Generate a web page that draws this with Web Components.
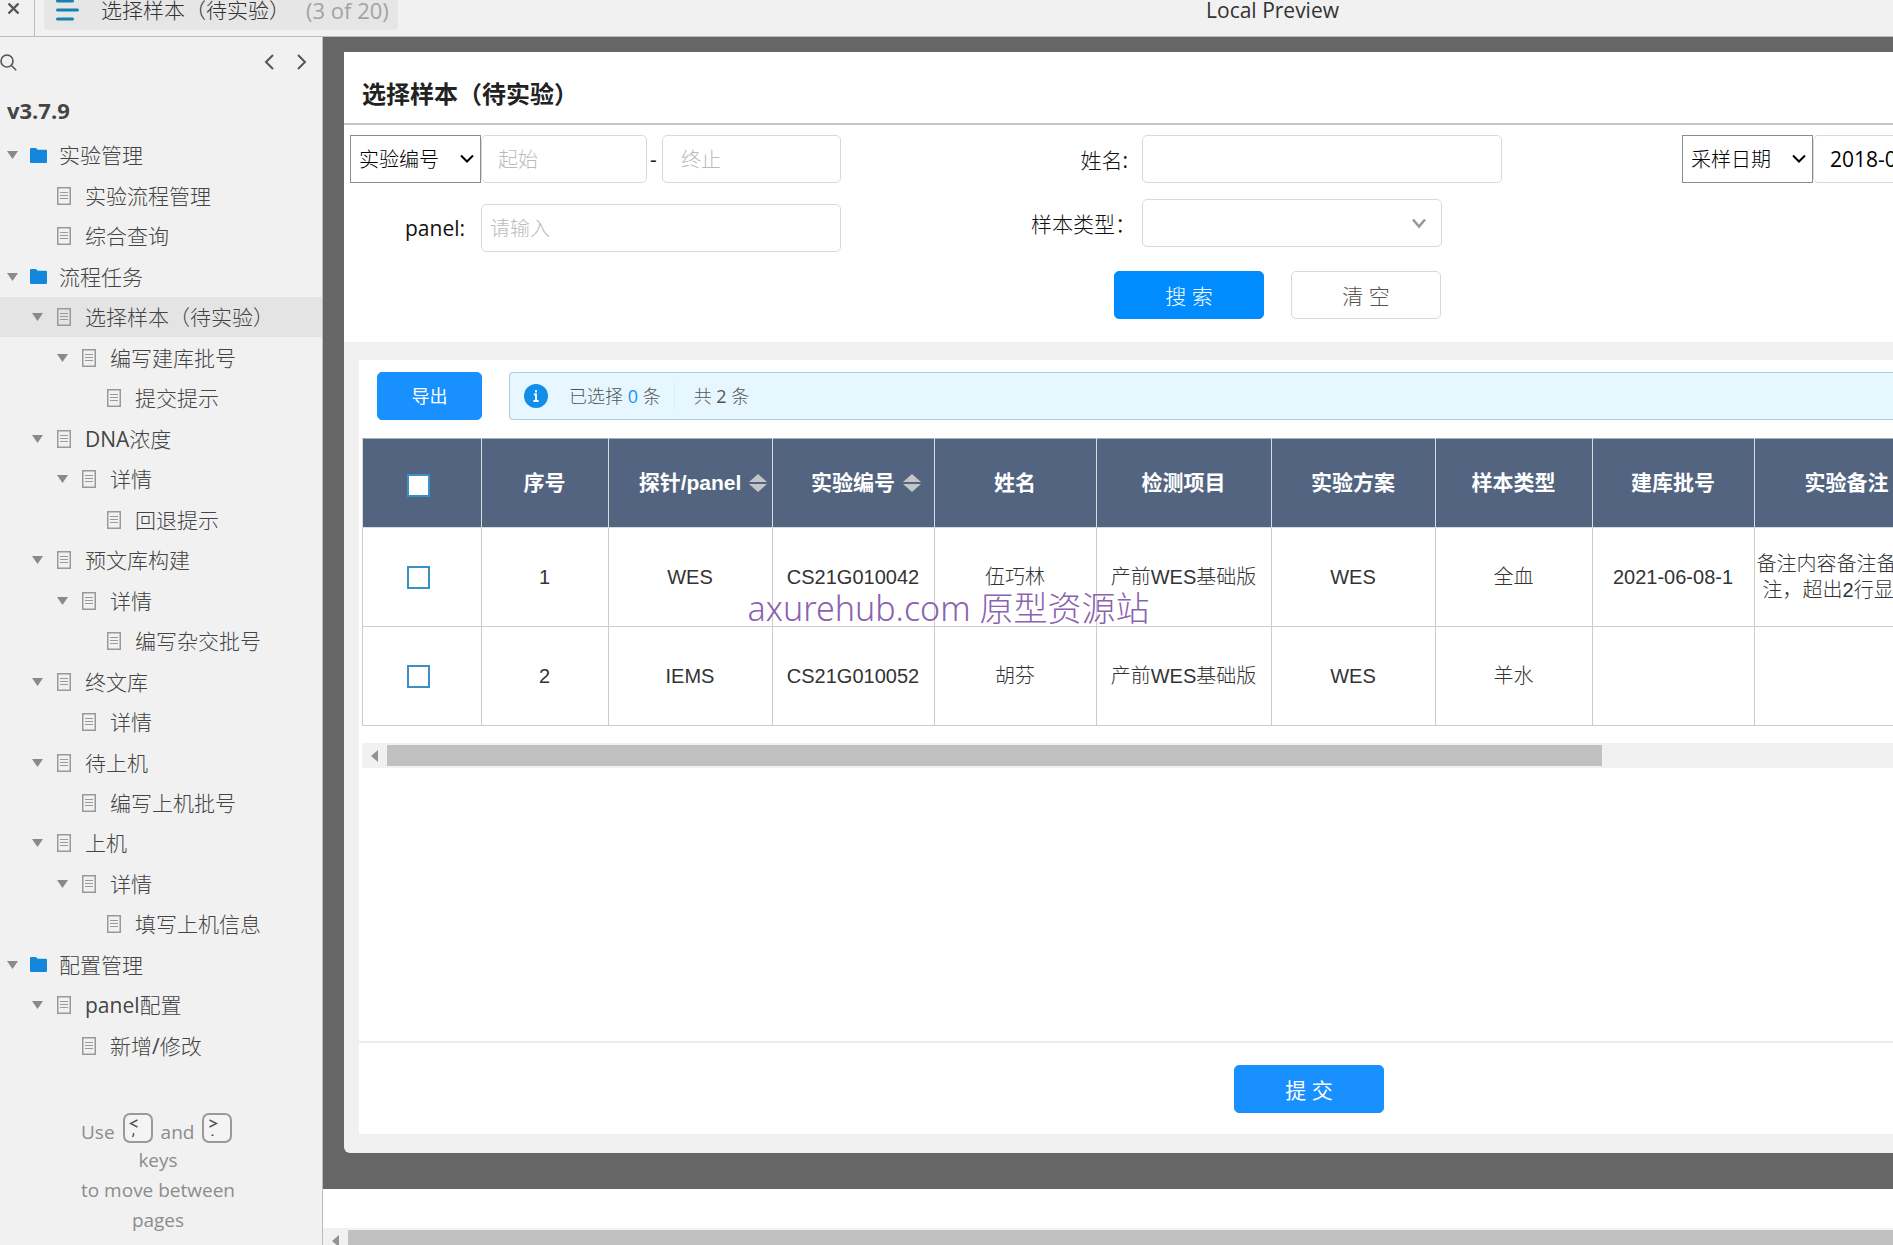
<!DOCTYPE html>
<html lang="zh-CN">
<head>
<meta charset="utf-8">
<title>选择样本（待实验）</title>
<style>
  html, body { margin: 0; height: 100%; }
  body {
    font-family: "Open Sans", "Noto Sans CJK SC", sans-serif;
    font-size: 21px;
    color: #333;
    background: #fff;
    overflow: hidden;
    --thin-cjk: "Open Sans", "Noto Sans CJK SC Light", "Noto Sans CJK SC", sans-serif;
  }
</style>
</head>
<body>
<preview-app></preview-app>

<script>
const BASE = `<style>
  *, *::before, *::after { box-sizing: border-box; }
  a { color: inherit; text-decoration: none; }
  button, input, select { font: inherit; color: inherit; margin: 0; }
  svg { display: block; flex: none; }
</style>`;

/* Registers an element whose shadow root holds the given markup. */
function define(tag, markup) {
  customElements.define(tag, class extends HTMLElement {
    constructor() {
      super();
      const root = this.attachShadow({ mode: "open" });
      root.innerHTML = BASE + (typeof markup === "function" ? markup(this) : markup);
    }
  });
}

/* ---------- small parts ---------- */

define("page-icon", `
  <style>:host { display: block; flex: none; }</style>
  <svg width="14" height="18" viewBox="0 0 14 18" fill="none" stroke="#999">
    <rect x="0.75" y="0.75" width="12.5" height="16.5" stroke-width="1.5"/>
    <path d="M3 5.5h8M3 8.5h8M3 11.5h8" stroke-width="1.2"/>
  </svg>`);

define("folder-icon", `
  <style>:host { display: block; flex: none; }</style>
  <svg width="17" height="15" viewBox="0 0 17 15" fill="#1487dc">
    <path d="M0 1.2Q0 0 1.2 0H6l1.6 1.8H16q1 0 1 1V14q0 1-1 1H1q-1 0-1-1z"/>
  </svg>`);

define("key-hint", el => `
  <style>
    :host { display: block; flex: none; width: 30px; height: 30px; margin: 0 8px 8px;
      border: 2px solid #999; border-radius: 7px; background: #f4f4f4; }
    svg { margin: 4px 0 0 4px; }
  </style>
  <svg width="10" height="20" viewBox="0 0 10 20" fill="none" stroke="#555" stroke-width="1.4">
    ${el.getAttribute("sign") === "less"
      ? `<path d="M8.5 1L1.5 4.5l7 3.5M4.5 14v2l-1 2"/>`
      : `<path d="M1.5 1l7 3.5-7 3.5M3.5 16.2h2"/>`}
  </svg>`);

define("ui-button", `
  <style>
    :host { display: block; flex: none; width: 150px; }
    button { width: 100%; height: 48px; padding: 0; border: 1px solid #1890ff; border-radius: 5px;
      background: #1890ff; color: #fff; cursor: pointer; }
    :host([small]) { width: 105px; font-size: 18px; }
    :host([small]) button { padding-bottom: 2px; }
    :host([search]) button { background: #008cff; border-color: #008cff; }
    :host([plain]) button { background: #fff; border-color: #d9d9d9; color: #555; font-family: var(--thin-cjk); }
  </style>
  <button type="button"><slot></slot></button>`);

define("scroll-track", `
  <style>
    :host { display: flex; flex: none; align-items: center; height: 25px; background: #f1f1f1; overflow: hidden; }
    .arrow { width: 25px; flex: none; }
    svg { margin: 0 auto; }
    .thumb { flex: none; width: var(--thumb, 100%); height: 21px; background: #c1c1c1; }
  </style>
  <div class="arrow"><svg width="7" height="12" viewBox="0 0 7 12" fill="#929292"><path d="M7 0v12L0 6z"/></svg></div>
  <div class="thumb"></div>`);

define("sort-arrows", `
  <style>:host { display: block; flex: none; }</style>
  <svg width="18" height="18" viewBox="0 0 18 18" fill="#c4c6c6"><path d="M9 0l9 8H0zM0 10h18l-9 8z"/></svg>`);

/* ---------- top bar ---------- */

define("top-bar", `
  <style>
    :host { display: flex; height: 37px; background: #f1f1f1; border-bottom: 1px solid #bbb; }
    .close { width: 35px; height: 36px; padding: 0 0 0 7px; border: 0; border-right: 1px solid #bbb; background: none; flex: none; }
    .close svg { margin-top: -16px; }
    .left, .right { flex: 1; display: flex; }
    .page { display: flex; align-items: center; height: 40px; margin: -10px 0 0 9px; padding: 0 9px 0 12px;
      background: #e6e6e6; border-radius: 4px; white-space: nowrap; font-family: var(--thin-cjk); }
    .page svg { margin-right: 22px; }
    .page span { line-height: 20px; }
    .count { color: #a3a3a3; margin-left: 16px; font-size: 22px; }
    .title { line-height: 20px; color: #333; }
    .right { max-width: 554px; }
  </style>
  <div class="left">
    <button class="close" type="button" aria-label="Close">
      <svg width="13" height="13" viewBox="0 0 13 13" stroke="#555" stroke-width="2.4"><path d="M1.5 1.5l10 10M11.5 1.5l-10 10"/></svg>
    </button>
    <a class="page" href="#">
      <svg width="23" height="22" viewBox="0 0 23 22" stroke="#1682b0" stroke-width="3" stroke-linecap="round">
        <path d="M1.5 2h15M1.5 11h20M1.5 20h15"/>
      </svg>
      <span>选择样本（待实验）</span><span class="count">(3 of 20)</span>
    </a>
  </div>
  <div class="title">Local Preview</div>
  <div class="right"></div>`);

/* ---------- sidebar ---------- */

define("tree-item", el => {
  const level = Number(el.getAttribute("level"));
  const folder = level === 0;
  return `
  <style>
    :host { display: block; flex: 1; min-height: 0; }
    :host([current]) { background: #e4e4e4; }
    a { display: flex; align-items: center; height: 100%; padding-left: ${7 + level * 25}px;
      color: #444; white-space: nowrap; font-family: var(--thin-cjk); }
    .toggle { width: ${folder ? 23 : 25}px; flex: none; }
    span { margin-left: ${folder ? 12 : 14}px; padding-bottom: 2px; }
  </style>
  <a href="#">
    <div class="toggle">${el.hasAttribute("leaf") ? "" :
      `<svg width="11" height="8" viewBox="0 0 11 8" fill="#8a8a8a"><path d="M0 0h11L5.5 8z"/></svg>`}</div>
    ${folder ? "<folder-icon></folder-icon>" : "<page-icon></page-icon>"}
    <span><slot></slot></span>
  </a>`;
});

define("side-nav", `
  <style>
    :host { display: block; width: 323px; background: #f1f1f1; border-right: 1px solid #bbb; }
    .tools { display: flex; align-items: center; height: 50px; padding: 0 14px 0 0; }
    .tools button { border: 0; background: none; padding: 0; }
    .tools .next { margin-left: 21px; }
    .grow { flex: 1; }
    h1 { margin: 0; padding: 0 0 2px 7px; font-size: 22px; line-height: 46px; font-weight: 700; color: #444; }
    nav { display: flex; flex-direction: column; height: 931px; }
    .hint { margin: 52px auto 0; width: 180px; text-align: center; font-size: 19px; line-height: 30px; color: #8c8c8c;
      padding-right: 6px; }
    .hint p { margin: 0; }
    .hint .keys { display: flex; align-items: center; height: 27px; padding-left: 10px; }
  </style>
  <div class="tools">
    <button type="button" aria-label="Search">
      <svg width="17" height="17" viewBox="0 0 17 17" fill="none" stroke="#555" stroke-width="1.6"><circle cx="7" cy="7" r="6"/><path d="M11.2 11.2l5 5"/></svg>
    </button>
    <div class="grow"></div>
    <button type="button" aria-label="Previous page">
      <svg width="12" height="16" viewBox="0 0 12 16" fill="none" stroke="#555" stroke-width="2"><path d="M10 1L3 8l7 7"/></svg>
    </button>
    <button class="next" type="button" aria-label="Next page">
      <svg width="12" height="16" viewBox="0 0 12 16" fill="none" stroke="#555" stroke-width="2"><path d="M2 1l7 7-7 7"/></svg>
    </button>
  </div>
  <h1>v3.7.9</h1>
  <nav>
    <tree-item level="0">实验管理</tree-item>
    <tree-item level="1" leaf>实验流程管理</tree-item>
    <tree-item level="1" leaf>综合查询</tree-item>
    <tree-item level="0">流程任务</tree-item>
    <tree-item level="1" current>选择样本（待实验）</tree-item>
    <tree-item level="2">编写建库批号</tree-item>
    <tree-item level="3" leaf>提交提示</tree-item>
    <tree-item level="1">DNA浓度</tree-item>
    <tree-item level="2">详情</tree-item>
    <tree-item level="3" leaf>回退提示</tree-item>
    <tree-item level="1">预文库构建</tree-item>
    <tree-item level="2">详情</tree-item>
    <tree-item level="3" leaf>编写杂交批号</tree-item>
    <tree-item level="1">终文库</tree-item>
    <tree-item level="2" leaf>详情</tree-item>
    <tree-item level="1">待上机</tree-item>
    <tree-item level="2" leaf>编写上机批号</tree-item>
    <tree-item level="1">上机</tree-item>
    <tree-item level="2">详情</tree-item>
    <tree-item level="3" leaf>填写上机信息</tree-item>
    <tree-item level="0">配置管理</tree-item>
    <tree-item level="1">panel配置</tree-item>
    <tree-item level="2" leaf>新增/修改</tree-item>
  </nav>
  <div class="hint">
    <p class="keys"><span>Use</span><key-hint sign="less"></key-hint><span>and</span><key-hint sign="greater"></key-hint></p>
    <p>keys</p>
    <p>to move between</p>
    <p>pages</p>
  </div>`);

/* ---------- filter form ---------- */

define("filter-form", `
  <style>
    :host { display: block; height: 290px; background: #fff; overflow: hidden; }
    h2 { margin: 0; height: 73px; padding: 12px 0 0 18px; line-height: 60px; font-size: 24px; font-weight: 700;
      color: #222; border-bottom: 2px solid #c4c4c4; }
    form { display: flex; gap: 180px; padding: 10px 0 0 6px; color: #222; font-family: var(--thin-cjk); }
    .col { display: flex; flex-direction: column; flex: none; }
    .one { width: 491px; gap: 21px; }
    .two { width: 481px; gap: 16px; }
    .row { display: flex; align-items: center; }
    label { flex: none; text-align: right; color: #111; }
    .one label { width: 131px; padding-right: 16px; }
    .two label { width: 121px; padding-right: 14px; }
    .two label.wide { padding-right: 6px; }
    input { flex: 1; min-width: 0; height: 48px; border: 1px solid #d9d9d9; border-radius: 5px; background: #fff;
      padding: 0 8px; outline: 0; }
    input.inset { padding: 0 16px; }
    input.deep { padding: 0 18px; }
    input::placeholder { color: #bbb; opacity: 1; font-size: 20px; }
    .from { flex: none; width: 166px; }
    .dash { flex: none; width: 15px; padding-right: 2px; text-align: center; line-height: 40px; }
    .pick { display: grid; flex: none; width: 131px; align-items: center; }
    .pick > * { grid-area: 1 / 1; }
    .pick svg { justify-self: end; margin-right: 7px; pointer-events: none; }
    select { appearance: none; width: 100%; height: 48px; padding: 0 8px; border: 1px solid #8c8c8c; border-radius: 0;
      background: #fff; color: #000; font-size: 20px; outline: 0; }
    .pick.soft { width: 300px; }
    .pick.soft select { border-color: #d9d9d9; border-radius: 5px; }
    .pick.soft svg { margin-right: 16px; }
    .date { color: #000; }
    .actions { gap: 27px; margin: 8px 0 0 93px; }
  </style>
  <h2>选择样本（待实验）</h2>
  <form>
    <div class="col one">
      <div class="row">
        <div class="pick">
          <select aria-label="编号类型"><option>实验编号</option></select>
          <svg width="14" height="10" viewBox="0 0 14 10" fill="none" stroke="#000" stroke-width="2"><path d="M1 1.5l6 6 6-6"/></svg>
        </div>
        <input class="from inset" type="text" placeholder="起始" aria-label="起始">
        <span class="dash">-</span>
        <input class="deep" type="text" placeholder="终止" aria-label="终止">
      </div>
      <div class="row">
        <label for="panel">panel:</label>
        <input id="panel" type="text" placeholder="请输入">
      </div>
    </div>
    <div class="col two">
      <div class="row">
        <label for="name">姓名:</label>
        <input id="name" type="text">
      </div>
      <div class="row">
        <label class="wide" for="kind">样本类型：</label>
        <div class="pick soft">
          <select id="kind"><option></option></select>
          <svg width="14" height="11" viewBox="0 0 14 11" fill="none" stroke="#999" stroke-width="2.6"><path d="M1 1.5l6 7 6-7"/></svg>
        </div>
      </div>
      <div class="row actions">
        <ui-button search>搜 索</ui-button>
        <ui-button plain>清 空</ui-button>
      </div>
    </div>
    <div class="col">
      <div class="row">
        <div class="pick">
          <select aria-label="日期类型"><option>采样日期</option></select>
          <svg width="14" height="10" viewBox="0 0 14 10" fill="none" stroke="#000" stroke-width="2"><path d="M1 1.5l6 6 6-6"/></svg>
        </div>
        <input class="from inset date" type="text" value="2018-01-01" aria-label="日期">
      </div>
    </div>
  </form>`);

/* ---------- results ---------- */

define("selection-bar", `
  <style>
    :host { display: flex; align-items: center; flex: 1; height: 48px; padding-left: 14px; font-size: 18px;
      font-family: var(--thin-cjk);
      color: #555; background: #e6f7ff; border: 1px solid #a9cfdf; border-right: 0; border-radius: 4px 0 0 4px; white-space: nowrap; }
    svg { margin-right: 21px; }
    span { padding-bottom: 2px; }
    b { font-weight: 400; color: #1890ff; }
    .total { margin-left: 13px; padding-left: 19px; border-left: 1px solid #d8ecf5; }
  </style>
  <svg width="24" height="24" viewBox="0 0 24 24"><circle cx="12" cy="12" r="12" fill="#108ee9"/>
    <path d="M12 6v2.4M9.8 10.4H12v6.4M9.4 17h5.2" stroke="#fff" stroke-width="1.8" fill="none"/></svg>
  <span>已选择 <b>0</b> 条</span><span class="total">共 2 条</span>`);

define("sample-table", `
  <style>
    :host { display: block; overflow: hidden; font-family: "Liberation Sans", "Noto Sans CJK SC Light", "Noto Sans CJK SC", sans-serif; font-size: 20px; }
    table { border-collapse: collapse; table-layout: fixed; width: 1577px; }
    th, td { border: 1px solid #ccc; padding: 0 1px 0 0; text-align: center; line-height: 26px; }
    th { height: 89px; background: #52647f; border-color: #d5dbe0; border-top-color: #a9b0ba; color: #fff; font-size: 21px; font-weight: 700;
      font-family: "Liberation Sans", "Noto Sans CJK SC", sans-serif; }
    td { height: 99px; color: #333; white-space: nowrap; overflow: hidden; }
    .sortable { display: grid; grid-template-columns: 1fr auto 1fr; align-items: center; column-gap: 8px; }
    .sortable span { grid-column: 2; }
    .tick { padding-right: 8px; }
    input { appearance: none; display: block; width: 23px; height: 23px; margin: 0 auto; border: 2px solid #3a8fc4; background: #fff; }
    th input { margin-top: 4px; }
  </style>
  <table>
    <colgroup>
      <col style="width:119px"><col style="width:127px"><col style="width:164px"><col style="width:162px"><col style="width:162px">
      <col style="width:175px"><col style="width:164px"><col style="width:157px"><col style="width:162px"><col style="width:185px">
    </colgroup>
    <thead><tr>
      <th class="tick"><input type="checkbox" aria-label="全选"></th>
      <th>序号</th>
      <th><div class="sortable"><span>探针/panel</span><sort-arrows></sort-arrows></div></th>
      <th><div class="sortable"><span>实验编号</span><sort-arrows></sort-arrows></div></th>
      <th>姓名</th><th>检测项目</th><th>实验方案</th><th>样本类型</th><th>建库批号</th><th>实验备注</th>
    </tr></thead>
    <tbody>
      <tr>
        <td class="tick"><input type="checkbox" aria-label="选择 1"></td>
        <td>1</td><td>WES</td><td>CS21G010042</td><td>伍巧林</td><td>产前WES基础版</td><td>WES</td><td>全血</td>
        <td>2021-06-08-1</td><td>备注内容备注备注备<br>注，超出2行显示...</td>
      </tr>
      <tr>
        <td class="tick"><input type="checkbox" aria-label="选择 2"></td>
        <td>2</td><td>IEMS</td><td>CS21G010052</td><td>胡芬</td><td>产前WES基础版</td><td>WES</td><td>羊水</td><td></td><td></td>
      </tr>
    </tbody>
  </table>`);

define("result-panel", `
  <style>
    :host { display: block; margin: 18px 0 0 15px; background: #fff; overflow: hidden; }
    .body { height: 681px; padding: 12px 0 0 3px; }
    .bar { display: flex; gap: 27px; padding-left: 15px; margin-bottom: 18px; }
    scroll-track { --thumb: 1215px; margin-top: 17px; }
    footer { display: flex; height: 93px; padding: 22px 0 0 875px; border-top: 2px solid #ececec; }
  </style>
  <div class="body">
    <div class="bar"><ui-button small>导出</ui-button><selection-bar></selection-bar></div>
    <sample-table></sample-table>
    <scroll-track></scroll-track>
  </div>
  <footer><ui-button>提 交</ui-button></footer>`);

/* ---------- shell ---------- */

define("preview-stage", `
  <style>
    :host { display: flex; flex-direction: column; min-width: 0; overflow: hidden; background: #fff; }
    .stage { flex: none; padding: 15px 0 36px 21px; background: #666; }
    .card { padding-bottom: 19px; background: #f0f0f0; border-radius: 0 0 0 6px; overflow: hidden; }
    .grow { flex: 1; }
    scroll-track { margin-bottom: -8px; }
  </style>
  <div class="stage"><div class="card">
    <filter-form></filter-form>
    <result-panel></result-panel>
  </div></div>
  <div class="grow"></div>
  <scroll-track></scroll-track>`);

define("preview-app", `
  <style>
    :host { display: grid; grid-template-rows: 37px minmax(0, 1fr); height: 100vh; position: relative; overflow: hidden; }
    main { display: grid; grid-template-columns: 323px minmax(0, 1fr); overflow: hidden; }
    .watermark { position: absolute; inset: 584px 0 auto 4px; text-align: center; line-height: 48px; font-size: 34px;
      font-weight: 300; color: #8a62b0; pointer-events: none; font-family: "Noto Sans", "Noto Sans CJK SC", sans-serif; }
  </style>
  <top-bar></top-bar>
  <main><side-nav></side-nav><preview-stage></preview-stage></main>
  <div class="watermark">axurehub.com 原型资源站</div>`);
</script>
</body>
</html>
